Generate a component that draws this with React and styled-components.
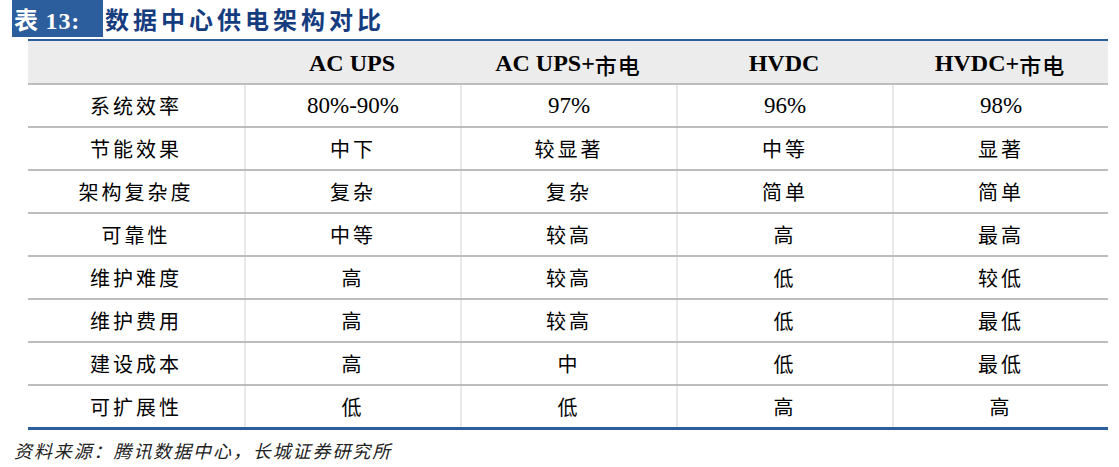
import React from 'react';
import styled, { createGlobalStyle } from 'styled-components';

const GlobalStyle = createGlobalStyle`
  html, body, #root {
    margin: 0;
    padding: 0;
    background: #fff;
  }
  body {
    font-family: "Liberation Serif", "Noto Sans CJK SC", serif;
    color: #000;
  }
`;

const Page = styled.div`
  width: 1119px;
  height: 467px;
  overflow: hidden;
`;

const TitleRow = styled.div`
  display: flex;
  align-items: stretch;
  height: 37px;
  margin-left: 12px;
`;

const TitleLabel = styled.div`
  background: #2c5d9c;
  color: #fff;
  width: 91px;
  display: flex;
  align-items: center;
  padding-left: 2px;
  box-sizing: border-box;
  font-size: 24px;
  font-weight: 700;
  letter-spacing: 0.8px;
  font-family: "Liberation Serif", "Noto Sans CJK SC", serif;
`;

const TitleText = styled.div`
  display: flex;
  align-items: center;
  padding-left: 2px;
  color: #163c80;
  font-size: 24px;
  font-weight: 700;
  letter-spacing: 4px;
  font-family: "Noto Sans CJK SC", sans-serif;
`;

const Table = styled.div`
  margin: 2px 0 0 28px;
  width: 1080px;
  border-top: 2px solid #2c5d9c;
  border-bottom: 3px solid #2c5d9c;
`;

const Row = styled.div`
  display: grid;
  grid-template-columns: repeat(5, 216px);
  height: ${p => (p.$head ? '42px' : '41px')};
  background: ${p => (p.$head ? '#ececec' : '#fff')};
  border-bottom: ${p => (p.$last ? 'none' : '2px solid #bdbdbd')};
`;

const Cell = styled.div`
  display: flex;
  align-items: center;
  justify-content: center;
  font-size: ${p => (p.$head ? '24px' : '20px')};
  font-weight: ${p => (p.$head ? 700 : 400)};
  letter-spacing: ${p => (p.$head ? '0' : '3px')};
  border-left: ${p => (p.$first || p.$head ? 'none' : '2px solid #e8e8e8')};
  padding-top: ${p => (p.$head ? '3px' : '0')};
  font-family: "Liberation Serif", "Noto Sans CJK SC", serif;
`;

const Num = styled.span`
  font-size: 23px;
  letter-spacing: 0;
`;

const Cjk = styled.span`
  font-size: 22px;
  font-weight: 500;
  letter-spacing: 1px;
`;

const Source = styled.div`
  margin: 7px 0 0 14px;
  font-size: 18px;
  font-style: italic;
  color: #222;
  letter-spacing: 1.9px;
  font-family: "Noto Sans CJK SC", sans-serif;
`;

const head = ['', 'AC UPS', ['AC UPS+', '市电'], 'HVDC', ['HVDC+', '市电']];

const rows = [
  ['系统效率', '80%-90%', '97%', '96%', '98%'],
  ['节能效果', '中下', '较显著', '中等', '显著'],
  ['架构复杂度', '复杂', '复杂', '简单', '简单'],
  ['可靠性', '中等', '较高', '高', '最高'],
  ['维护难度', '高', '较高', '低', '较低'],
  ['维护费用', '高', '较高', '低', '最低'],
  ['建设成本', '高', '中', '低', '最低'],
  ['可扩展性', '低', '低', '高', '高'],
];

const fmt = (t) => (/^[\d%\-]+$/.test(t) ? <Num>{t}</Num> : t);

export default function App() {
  return (
    <Page>
      <GlobalStyle />
      <TitleRow>
        <TitleLabel>表 13:</TitleLabel>
        <TitleText>数据中心供电架构对比</TitleText>
      </TitleRow>
      <Table>
        <Row $head>
          {head.map((h, i) => (
            <Cell key={i} $head>
              {Array.isArray(h) ? (
                <>
                  {h[0]}
                  <Cjk>{h[1]}</Cjk>
                </>
              ) : (
                h
              )}
            </Cell>
          ))}
        </Row>
        {rows.map((r, ri) => (
          <Row key={ri} $last={ri === rows.length - 1}>
            {r.map((c, ci) => (
              <Cell key={ci} $first={ci === 0}>{fmt(c)}</Cell>
            ))}
          </Row>
        ))}
      </Table>
      <Source>资料来源：腾讯数据中心，长城证券研究所</Source>
    </Page>
  );
}
